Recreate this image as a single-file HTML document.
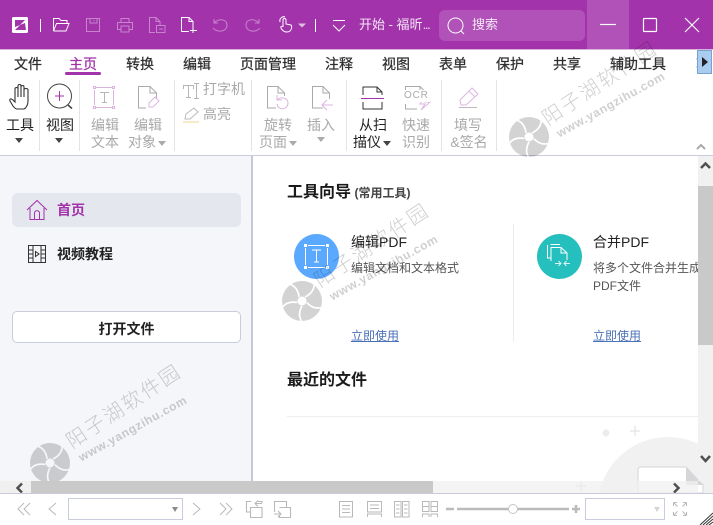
<!DOCTYPE html>
<html><head><meta charset="utf-8">
<style>
html,body{margin:0;padding:0;width:713px;height:525px;overflow:hidden;background:#fff}
body{font-family:"Liberation Sans","Noto Sans CJK SC",sans-serif;position:relative}
.a{position:absolute;white-space:nowrap}
.tab{position:absolute;top:55px;font-size:14px;line-height:18px;color:#2e2e2e;-webkit-text-stroke:.25px #2e2e2e;white-space:nowrap}
.sep{position:absolute;top:80px;width:1px;height:71px;background:#e3e4ea}
.lb{position:absolute;font-size:14px;line-height:17px;text-align:center;white-space:nowrap;color:#a9a9a9;transform:translateX(-50%)}
.dk{color:#222}
.tri{display:inline-block;width:0;height:0;border:4px solid transparent;border-top:5px solid #777;border-bottom:0;vertical-align:middle;margin-left:2px}
.wm1,.wm2{position:absolute;color:#d0d0d0;white-space:nowrap;transform-origin:0 0;mix-blend-mode:multiply}
.wm1{font-size:20px;font-weight:300;letter-spacing:2.300px;line-height:24px;transform:rotate(-33.700deg)}
.wm2{font-size:12px;font-weight:bold;letter-spacing:.7px;line-height:15px;transform:rotate(-29deg);font-family:"Liberation Sans",sans-serif}
svg{position:absolute;overflow:hidden}
</style></head><body>
<svg width="0" height="0" style="position:absolute"><defs>
<path id="bl" d="M3-4C9-7 13-12 12-19" fill="none" stroke="#fff" stroke-width="1.700"/>
<g id="sw"><circle r="20" fill="#d3d3d3"/><use href="#bl"/><use href="#bl" transform="rotate(72)"/><use href="#bl" transform="rotate(144)"/><use href="#bl" transform="rotate(216)"/><use href="#bl" transform="rotate(288)"/><circle r="4.500" fill="#fff"/></g>
</defs></svg>

<!-- title bar -->
<div class="a" style="left:0;top:0;width:713px;height:49px;background:#a233ab"></div>
<div class="a" style="left:0;top:49px;width:713px;height:1px;background:#d8b4db"></div>
<svg style="left:0;top:0" width="713" height="49" fill="none" stroke="#fff" stroke-width="1">
<rect x="12" y="17" width="16" height="16" rx="1.500" fill="#fff" stroke="none"/>
<path d="M15 20H25L20 25 25 23 26 30H15L20 25 15 27Z" fill="#a233ab" stroke="none"/>
<path d="M40.500 19V32"/>
<path d="M53.500 31V18.500H59L61 20.500H67V23.500M53.500 31H66L69 23.500H56.500L53.500 31"/>
<g opacity=".4"><path d="M86.500 18.500H99.500V31.500H86.500ZM90 18.500V23H97V18.500M94 20V21"/>
<path d="M121 22V18.500H129V22M117.500 22.500H132.500V29.500H129M121 29.500H117.500V22.500M121 26H129V32H121Z"/>
<path d="M155 32.500H149.500V17.500H156L160 21.500V25M156 17.500V21.500H160M156.500 25.500H165V32.500H156.500ZM159 29H163"/>
<path d="M213 28C217 33 227 32 227 25 227 19 219 18 214 23M214 19V23H218"/><path d="M260 28C256 33 246 32 246 25 246 19 254 18 259 23M259 19V23H255"/></g>
<path d="M181.500 31.500V17.500H189L193 21.500V27M189 17.500V21.500H193M189 31.500H181.500M193 27V33M190 30.500H197"/>
<path d="M283 27V20C283 18 286 18 286 20V24L291 25C292 26 292 29 290 31 287 33 283 32 281 28 280 26 283 26 283 27ZM280 22C279 18 283 16 285 17"/>
<path d="M298 23.500H306L302 27.500Z" fill="#dcc0e0" stroke="none"/>
<path d="M315.500 19V32"/>
<path d="M333 20.500H345M333 25L339 31 345 25"/>
</svg>
<div class="a" style="left:359px;top:16px;font-size:13px;line-height:18px;color:#f4e6f5">开始 - 福昕<span style="letter-spacing:-1.300px">...</span></div>
<div class="a" style="left:439px;top:10px;width:146px;height:31px;border-radius:6px;background:#b052b8"></div>
<svg style="left:446px;top:17px" width="24" height="20" fill="none" stroke="#fff" stroke-width="1"><circle cx="9.500" cy="8.500" r="7.500"/><path d="M15 14L18 17"/></svg>
<div class="a" style="left:472px;top:16px;font-size:13px;line-height:18px;color:#f4e6f5">搜索</div>
<div class="a" style="left:587px;top:0;width:42px;height:49px;background:#b052b8"></div>
<svg style="left:587px;top:0" width="126" height="49" fill="none" stroke="#fff" stroke-width="1.200"><path d="M13 24.500H29"/><rect x="56.500" y="18.500" width="13" height="13" rx="1"/><path d="M98 18L112 32M112 18L98 32"/></svg>

<!-- tabs -->
<div class="tab" style="left:14px">文件</div>
<div class="tab" style="left:69px;color:#a233ab;-webkit-text-stroke-color:#a233ab">主页</div>
<div class="a" style="left:65px;top:72px;width:36px;height:3px;border-radius:2px;background:#a233ab"></div>
<div class="tab" style="left:126px">转换</div>
<div class="tab" style="left:183px">编辑</div>
<div class="tab" style="left:240px">页面管理</div>
<div class="tab" style="left:325px">注释</div>
<div class="tab" style="left:382px">视图</div>
<div class="tab" style="left:439px">表单</div>
<div class="tab" style="left:496px">保护</div>
<div class="tab" style="left:553px">共享</div>
<div class="tab" style="left:610px">辅助工具</div>
<div class="a" style="left:696px;top:50px;width:17px;height:30px;background:#fff"></div>
<div class="a" style="left:696px;top:55px;font-size:14px;line-height:18px;width:3px;overflow:hidden;color:#3a3a3a">转</div>
<div class="a" style="left:697px;top:50px;width:15px;height:24px;background:#a9cdf0;border:1px solid #7aa2cc;box-sizing:border-box"></div>
<div class="a" style="left:702px;top:57px;width:0;height:0;border:5px solid transparent;border-left:6px solid #222;border-right:0"></div>

<!-- ribbon separators -->
<div class="sep" style="left:39px"></div><div class="sep" style="left:79px"></div>
<div class="sep" style="left:174px"></div><div class="sep" style="left:251px"></div>
<div class="sep" style="left:346px"></div><div class="sep" style="left:441px"></div><div class="sep" style="left:496px"></div>

<!-- ribbon icons -->
<svg style="left:0;top:80px" width="520" height="45" fill="none" stroke="#aaa" stroke-width="1">
<path d="M13 26L10 21C9 19 11 18 13 20L15 22V9C15 7 18 7 18 9V6C18 4 21 4 21 6V7C21 5 24 5 24 7V10C24 8 28 8 28 10V21C28 25 26 28 24 29H17C15 29 14 27 13 26ZM18 9V17M21 7V17M24 10V17" stroke="#333" stroke-width="1.100"/>
<circle cx="59.500" cy="16" r="12" stroke="#444"/><path d="M68 25L72 28.500" stroke="#444" stroke-width="1.500"/><path d="M55 16H64M59.500 11V21" stroke="#a233ab"/>
<g stroke="#d9b5de"><path d="M96 7.500H112M96 27.500H112M94.500 10V25M113.500 10V25"/><rect x="93.500" y="6.500" width="2" height="2"/><rect x="112.500" y="6.500" width="2" height="2"/><rect x="93.500" y="26.500" width="2" height="2"/><rect x="112.500" y="26.500" width="2" height="2"/></g>
<path d="M100 12.500H109M104.500 12.500V22.500M102 22.500H107" stroke="#b5b5b5"/>
<path d="M146 28H138.500V6.500H150L156.500 13V19M150 6.500V13H156.500"/>
<path d="M149 27V23L155 17 159 21 153 27Z" stroke="#dcb6e0"/>
<path d="M183.500 9V5.500H193.500V9M188.500 5.500V17.500M186 17.500H191M194 3.500H199M194 18.500H199M196.500 3.500V18.500" stroke="#b5b5b5"/>
<path d="M183 42H199" stroke="#f0d48e"/>
<path d="M185 39L186 34 194 28 198 32 190 39Z" stroke="#bbb"/>
<path d="M276 28H267.500V6.500H278L284.500 13V16M278 6.500V13H284.500"/>
<path d="M277 24C278 31 288 30 288 23 288 18 281 16 277 20M277 15V20H282" stroke="#dcb6e0"/>
<path d="M323 28H312.500V6.500H323L329.500 13V19M323 6.500V13H329.500"/>
<path d="M322 25H333M327 20L322 25 327 30" stroke="#dcb6e0"/>
<path d="M363 15V7H377L382 12V15M377 7V12H382M363 22V29H382V22" stroke="#333"/>
<path d="M361 18.500H384" stroke="#a233ab"/>
<path d="M405.500 12V6.500H420L425.500 12V14M405.500 24V29H417M420 6.500V12H425.500"/>
<path d="M424 18L420 24H425L421 30 430 22H425L428 18Z" stroke="#dcb6e0"/>
<path d="M461 25L460 20 472 8 478 14 466 25ZM469 11L475 17" stroke="#dcb6e0"/>
<path d="M459 27.500H477" stroke="#bbb"/>
</svg>
<div class="a" style="left:403px;top:90px;font-size:10px;line-height:12px;letter-spacing:.8px;color:#aaa;background:#fff;padding:0 1px">OCR</div>
<div class="a" style="left:203px;top:81px;font-size:14px;line-height:17px;color:#a9a9a9">打字机</div>
<div class="a" style="left:203px;top:106px;font-size:14px;line-height:17px;color:#a9a9a9">高亮</div>

<!-- ribbon labels -->
<div class="lb dk" style="left:20px;top:117px">工具</div>
<div class="a" style="left:15px;top:138px;width:0;height:0;border:4px solid transparent;border-top:5px solid #444;border-bottom:0"></div>
<div class="lb dk" style="left:60px;top:117px">视图</div>
<div class="a" style="left:55px;top:138px;width:0;height:0;border:4px solid transparent;border-top:5px solid #444;border-bottom:0"></div>
<div class="lb" style="left:105px;top:117px">编辑</div><div class="lb" style="left:105px;top:134px">文本</div>
<div class="lb" style="left:148px;top:117px">编辑</div><div class="lb" style="left:147px;top:134px">对象<span class="tri" style="border-top-color:#aaa"></span></div>
<div class="lb" style="left:278px;top:117px">旋转</div><div class="lb" style="left:278px;top:134px">页面<span class="tri" style="border-top-color:#aaa"></span></div>
<div class="lb" style="left:321px;top:117px">插入</div>
<div class="a" style="left:317px;top:137px;width:0;height:0;border:4px solid transparent;border-top:5px solid #aaa;border-bottom:0"></div>
<div class="lb dk" style="left:373px;top:117px">从扫</div><div class="lb dk" style="left:372px;top:134px">描仪<span class="tri" style="border-top-color:#444"></span></div>
<div class="lb" style="left:416px;top:117px">快速</div><div class="lb" style="left:416px;top:134px">识别</div>
<div class="lb" style="left:468px;top:117px">填写</div><div class="lb" style="left:469px;top:134px">&amp;签名</div>
<svg style="left:695px;top:143px" width="12" height="8" fill="none" stroke="#aaa" stroke-width="2"><path d="M2 6L6 2 10 6"/></svg>
<div class="a" style="left:0;top:155px;width:713px;height:1px;background:#c9ccd9"></div>

<!-- left panel -->
<div class="a" style="left:0;top:156px;width:251px;height:325px;background:#f4f6fa"></div>
<div class="a" style="left:251px;top:156px;width:2px;height:325px;background:#c5c9dc"></div>
<div class="a" style="left:12px;top:193px;width:229px;height:34px;border-radius:6px;background:#e5e7ef"></div>
<svg style="left:26px;top:199px" width="22" height="22" fill="none" stroke="#a233ab" stroke-width="1"><path d="M1 11L11 1.500 21 11M4 9V20.500H18V9M8.500 20.500V14C8.500 11 13.500 11 13.500 14V20.500"/></svg>
<div class="a" style="left:57px;top:201px;font-size:14px;line-height:19px;font-weight:bold;color:#a233ab">首页</div>
<svg style="left:28px;top:245px" width="18" height="19" fill="none" stroke="#333" stroke-width="1"><rect x=".5" y=".5" width="17" height="17"/><path d="M5 .5V17.500M13 .5V17.500M.5 5H5M.5 9H5M.5 13H5M13 5H17.500M13 9H17.500M13 13H17.500M7.500 6.500L11 9 7.500 11.500Z"/></svg>
<div class="a" style="left:57px;top:245px;font-size:14px;line-height:19px;font-weight:bold;color:#222">视频教程</div>
<div class="a" style="left:12px;top:311px;width:229px;height:32px;box-sizing:border-box;border:1px solid #c9ccdc;border-radius:5px;background:#fff;text-align:center;font-size:14px;line-height:34px;font-weight:bold;color:#222">打开文件</div>

<!-- main -->
<div class="a" style="left:287px;top:182px;font-size:16px;line-height:22px;font-weight:bold;color:#1a1a1a">工具向导 <span style="font-size:12px;color:#444;margin-left:-1px">(常用工具)</span></div>
<svg style="left:294px;top:234px" width="46" height="46"><circle cx="22.500" cy="22.500" r="22.500" fill="#5aa9ff"/><g fill="none" stroke="#fff" stroke-width="1"><path d="M14 11.500H31M14 33.500H31M11.500 14V31M33.500 14V31M18 16H27M22.500 16V28M20 28H25"/></g><g fill="#fff"><rect x="10" y="10" width="3" height="3"/><rect x="32" y="10" width="3" height="3"/><rect x="10" y="32" width="3" height="3"/><rect x="32" y="32" width="3" height="3"/></g></svg>
<div class="a" style="left:351px;top:233px;font-size:14px;line-height:18px;color:#222">编辑PDF</div>
<div class="a" style="left:351px;top:260px;font-size:12px;line-height:17px;color:#555">编辑文档和文本格式</div>
<div class="a" style="left:351px;top:328px;font-size:12px;line-height:17px;color:#4a72b8;text-decoration:underline">立即使用</div>
<div class="a" style="left:513px;top:224px;width:1px;height:118px;background:#ececec"></div>
<svg style="left:537px;top:234px" width="46" height="46"><circle cx="22.500" cy="22.500" r="22.500" fill="#25bfbd"/><g fill="none" stroke="#fff" stroke-width="1"><path d="M13.500 10.500H23M10.500 11V24H13.500M14 27V13.500H24L30 19V26M24 13.500V19H30"/><path d="M18 29.500H24M21.500 27L24 29.500 21.500 32M33 29.500H27M29.500 27L27 29.500 29.500 32" stroke="#d9f4f3"/></g></svg>
<div class="a" style="left:593px;top:233px;font-size:14px;line-height:18px;color:#222">合并PDF</div>
<div class="a" style="left:593px;top:260px;width:105px;overflow:hidden;font-size:12px;line-height:17px;color:#555">将多个文件合并生成</div>
<div class="a" style="left:593px;top:278px;font-size:12px;line-height:17px;color:#555">PDF文件</div>
<div class="a" style="left:593px;top:328px;font-size:12px;line-height:17px;color:#4a72b8;text-decoration:underline">立即使用</div>
<div class="a" style="left:287px;top:370px;font-size:16px;line-height:22px;font-weight:bold;color:#1a1a1a">最近的文件</div>
<div class="a" style="left:287px;top:416px;width:411px;height:1px;background:#eeeeef"></div>

<!-- decorative bottom right -->
<svg style="left:0;top:0" width="713" height="493">
<path d="M599.400 493A70 70 0 0 1 713 453.400V493Z" fill="#f1f1f2"/>
<circle cx="606" cy="433" r="3.500" fill="#ececee"/>
<path d="M630 431H640M635 426V436" stroke="#e8e8ea" stroke-width="1.500"/>
<path d="M576 486H586M581 481V491" stroke="#d9d9db" stroke-width="1.500"/>
<path d="M638 493V470Q638 467 641 467H686L703 485V493Z" fill="#fff" stroke="#e0e0e2" stroke-width="1.500"/>
<path d="M686 467V485H703Z" fill="#d6d6d8"/>
</svg>

<!-- watermarks -->
<svg style="left:0;top:0;mix-blend-mode:multiply" width="713" height="525"><use href="#sw" x="529" y="137"/><use href="#sw" x="302" y="301"/><use href="#sw" x="50" y="463"/></svg>
<div class="wm1" style="left:538px;top:111px">阳子湖软件园</div>
<div class="wm2" style="left:554px;top:128px">www.yangzihu.com</div>
<div class="wm1" style="left:310px;top:273px">阳子湖软件园</div>
<div class="wm2" style="left:327px;top:291px">www.yangzihu.com</div>
<div class="wm1" style="left:62px;top:434px">阳子湖软件园</div>
<div class="wm2" style="left:76px;top:452px">www.yangzihu.com</div>

<!-- scrollbars -->
<div class="a" style="left:698px;top:156px;width:15px;height:325px;background:#f0f0f0;opacity:.95"></div>
<div class="a" style="left:698px;top:186px;width:15px;height:159px;background:#c9c9c9"></div>
<svg style="left:698px;top:160px" width="15" height="12" fill="none" stroke="#505050" stroke-width="2.500"><path d="M3 8L7.500 3.500 12 8"/></svg>
<svg style="left:698px;top:453px" width="15" height="12" fill="none" stroke="#505050" stroke-width="2.500"><path d="M3 3L7.500 8 12 3"/></svg>
<div class="a" style="left:0;top:481px;width:31px;height:12px;background:#f0f0f0"></div>
<div class="a" style="left:31px;top:481px;width:402px;height:12px;background:#c9c9c9"></div>
<div class="a" style="left:433px;top:481px;width:265px;height:12px;background:#f0f0f0;opacity:.75"></div>
<svg style="left:14px;top:482px" width="12" height="11" fill="none" stroke="#505050" stroke-width="2.500"><path d="M8 1.500L3.500 6 8 10.500"/></svg>
<svg style="left:671px;top:482px" width="12" height="11" fill="none" stroke="#505050" stroke-width="2.500"><path d="M3 1.500L7.500 6 3 10.500"/></svg>

<!-- status bar -->
<div class="a" style="left:0;top:493px;width:713px;height:32px;background:#fff;border-top:1px solid #c9ccdc;box-sizing:border-box"></div>
<svg style="left:0;top:493px" width="713" height="32" fill="none" stroke="#b9b9b9" stroke-width="1">
<path d="M24 10L18 16 24 22M30 10L24 16 30 22"/>
<path d="M56 10L49 16 56 22"/>
<path d="M193 10L200 16 193 22"/>
<path d="M220 10L226 16 220 22M226 10L232 16 226 22"/>
<path d="M250 19H246.500V8.500H251M258 8.500H262V10M250.500 14.500H262V24.500H250.500ZM262 10.500H255M258 7.500L255 10.500 258 13.500" stroke-width="1.100"/>
<path d="M274.500 19V8.500H286.500V14M279.500 14.500H290.500V24.500H279.500V23M274 21H281M278 18L281 21 278 24" stroke-width="1.100"/>
<rect x="339.500" y="8.500" width="13" height="15.500"/><path d="M342 12.500H350M342 16H350M342 19.500H350"/>
<rect x="367.500" y="8.500" width="14" height="10.500"/><path d="M370 12H379M370 15.500H379M367.500 24V21H381.500V24"/>
<rect x="394.500" y="8.500" width="6.500" height="15.500"/><rect x="402.500" y="8.500" width="6.500" height="15.500"/>
<path d="M396 12H399.500M396 16H399.500M396 20H399.500M404 12H407.500M404 16H407.500M404 20H407.500"/>
<path d="M422.500 8.500H429V18.500H422.500ZM431 8.500H437.500V18.500H431ZM422.500 13.500H429M431 13.500H437.500M422.500 24V21H429V24M431 24V21H437.500V24"/>
<path d="M446 16H454M457 16H569" stroke-width="2.500" stroke="#bbb"/>
<circle cx="513" cy="16" r="4.500" fill="#fff" stroke="#c6c6c6"/>
<path d="M572 16H580M576 12V20" stroke-width="2.500" stroke="#bbb"/>
<path d="M673.500 9.500L677.500 13.500M673.500 9.500V13M673.500 9.500H677M686.500 9.500L682.500 13.500M686.500 9.500H683M686.500 9.500V13M673.500 22.500L677.500 18.500M673.500 22.500V19M673.500 22.500H677M686.500 22.500L682.500 18.500M686.500 22.500H683M686.500 22.500V19"/>
<path d="M700 32L713 20M703 32L713 23M706 32L713 26M709 32L713 29" stroke="#333"/>
</svg>
<div class="a" style="left:68px;top:498px;width:115px;height:22px;box-sizing:border-box;border:1px solid #c9ccdc;background:#fff"></div>
<div class="a" style="left:172px;top:507px;width:0;height:0;border:3.500px solid transparent;border-top:5px solid #8a8a8a;border-bottom:0"></div>
<div class="a" style="left:585px;top:498px;width:80px;height:22px;box-sizing:border-box;border:1px solid #c9ccdc;background:#fff"></div>
<div class="a" style="left:654px;top:507px;width:0;height:0;border:3.500px solid transparent;border-top:5px solid #d5d5d5;border-bottom:0"></div>
</body></html>
